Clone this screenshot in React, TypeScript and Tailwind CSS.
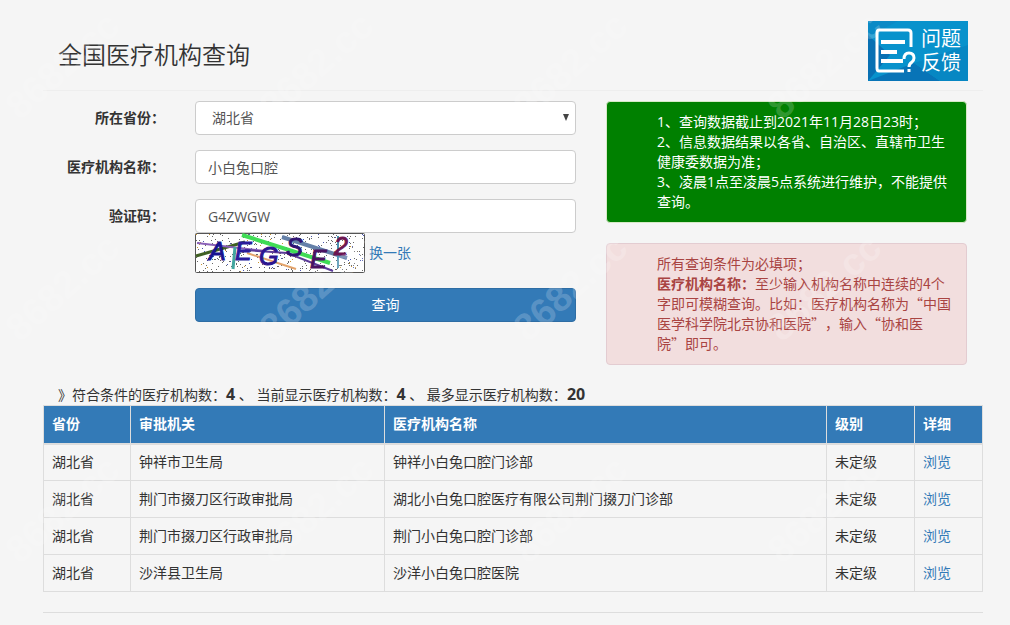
import { useId } from 'react';

type Clinic = {
  province: string;
  authority: string;
  name: string;
  level: string;
};

const CLINICS: Clinic[] = [
  { province: '湖北省', authority: '钟祥市卫生局', name: '钟祥小白兔口腔门诊部', level: '未定级' },
  { province: '湖北省', authority: '荆门市掇刀区行政审批局', name: '湖北小白兔口腔医疗有限公司荆门掇刀门诊部', level: '未定级' },
  { province: '湖北省', authority: '荆门市掇刀区行政审批局', name: '荆门小白兔口腔门诊部', level: '未定级' },
  { province: '湖北省', authority: '沙洋县卫生局', name: '沙洋小白兔口腔医院', level: '未定级' },
];

const COLUMNS = [
  { label: '省份', width: 'w-[87px]' },
  { label: '审批机关', width: 'w-[254px]' },
  { label: '医疗机构名称', width: '' },
  { label: '级别', width: 'w-[88px]' },
  { label: '详细', width: 'w-[68px]' },
];

const MARKS = [121, 343, 565].flatMap((y) => [20, 274, 528, 782].map((x) => ({ x, y })));

const CONTROL =
  'block h-[34px] w-full rounded-sm border border-[#ccc] bg-white px-3 text-sm text-[#555] outline-none focus:border-[#66afe9]';
const LABEL = 'w-[122px] shrink-0 pt-[7px] text-right text-sm leading-5 font-bold';

// Background specks of the captcha, spread by a small fixed generator
const SPECKS = Array.from({ length: 420 }, (_, i) => ({
  x: (i * 73 + ((i * i) % 41) * 5) % 168,
  y: (i * 31 + ((i * i) % 23) * 3) % 38,
  color: i % 9 === 0 ? '#c8952f' : i % 7 === 0 ? '#4a56b0' : '#666',
}));

const CAPTCHA_LETTERS = [
  { char: 'A', x: 14, y: 27, color: '#17138f' },
  { char: 'E', x: 40, y: 27, color: '#2a1a9c' },
  { char: 'G', x: 64, y: 32, color: '#2c1590' },
  { char: 'S', x: 91, y: 23, color: '#2f1272' },
  { char: 'E', x: 115, y: 35, color: '#4a1262' },
  { char: '2', x: 139, y: 22, color: '#6c1450' },
];

const Captcha = () => (
  <svg viewBox="0 0 170 40" className="block h-10 w-[170px] shrink-0" role="img" aria-label="验证码">
    <rect x="0.5" y="0.5" width="169" height="39" rx="1" fill="#fff" stroke="#555" />
    {SPECKS.map((s, i) => (
      <rect key={i} x={s.x + 1} y={s.y + 1} width="1" height="1" fill={s.color} />
    ))}
    <g fill="none">
      <path d="M1 23 L50 9" stroke="#3f5f22" strokeWidth="3" />
      <path d="M2 10 L70 18" stroke="#8a60b8" strokeWidth="2" />
      <path d="M47 2 L135 30" stroke="#3fdc55" strokeWidth="4" />
      <path d="M87 4 L152 25" stroke="#6480a8" strokeWidth="4" />
      <path d="M50 17 L92 20 L138 38" stroke="#5b3b98" strokeWidth="2" />
      <path d="M52 20 L101 36" stroke="#e3a36b" strokeWidth="2" />
      <path d="M40 14 L38 36" stroke="#43a6a0" strokeWidth="3" />
      <path d="M143 3 V35" stroke="#4c92b2" strokeWidth="2" />
    </g>
    <g fontFamily="Liberation Sans, sans-serif" fontSize="25" fontStyle="italic" strokeWidth="1">
      {CAPTCHA_LETTERS.map((l) => (
        <text key={l.x} x={l.x} y={l.y} fill={l.color} stroke={l.color}>
          {l.char}
        </text>
      ))}
    </g>
  </svg>
);

const FeedbackLink = () => (
  <a href="#feedback" className="relative flex h-[60px] w-[100px] items-center overflow-hidden bg-[#0892cc] pl-[7px] text-white">
    <svg viewBox="0 0 100 60" className="absolute inset-0 h-full w-full" aria-hidden="true">
      <path d="M0 16 L30 0 H0Z" fill="#0b8ac6" />
      <path d="M0 14 L22 34 L0 60Z" fill="#0870b3" />
      <path d="M0 60 L46 42 L72 60Z" fill="#0874b7" />
      <path d="M46 42 L100 24 V60 H72Z" fill="#0787c3" />
    </svg>
    <svg viewBox="0 0 42 46" className="relative h-[46px] w-[42px] shrink-0" fill="none" stroke="#fff" aria-hidden="true">
      <path d="M36 19 V5 Q36 2 33 2 H4 Q2 2 2 5 V40 Q2 43 4 43 H29" strokeWidth="3" />
      <path d="M6 14 H30 M6 24 H22 M6 33 H28" strokeWidth="4" />
      <path d="M29 31 Q29 25 34 25 Q39 25 39 30 Q39 32 37 34 Q34 36 34 39" strokeWidth="3" />
      <path d="M34 41 V44" strokeWidth="3" />
    </svg>
    <span className="relative ml-1 text-xl leading-6">
      问题
      <br />
      反馈
    </span>
  </a>
);

const Watermark = () => (
  <div className="pointer-events-none absolute inset-0 overflow-hidden" aria-hidden="true">
    <svg className="h-full w-full">
      {MARKS.map((m) => (
        <text
          key={`${m.x}-${m.y}`}
          x={m.x}
          y={m.y}
          transform={`rotate(-42 ${m.x} ${m.y})`}
          className="fill-white/20 font-bold"
          fontFamily="Liberation Sans, sans-serif"
          fontSize="38"
        >
          8682.cc
        </text>
      ))}
    </svg>
  </div>
);

export default function App() {
  const id = useId();

  return (
    <div className="relative min-h-screen bg-[#f5f5f5] px-7 font-['Open_Sans','Noto_Sans_CJK_SC',sans-serif] text-sm leading-5 text-[#333] sm:pr-[27px] sm:pl-[43px]">
      <header className="flex h-[91px] items-end justify-between border-b border-[#eee] px-[15px] pb-[9px]">
        <h1 className="pb-[13px] text-2xl leading-[26px] font-[350]">全国医疗机构查询</h1>
        <FeedbackLink />
      </header>

      <main>
        <div className="flex items-start gap-[30px] pt-[10px] pr-4">
          <form className="flex flex-1 flex-col gap-[15px]" onSubmit={(e) => e.preventDefault()}>
            <div className="flex gap-[30px]">
              <label htmlFor={`${id}-province`} className={LABEL}>所在省份：</label>
              <div className="relative flex-1">
                <select id={`${id}-province`} defaultValue="湖北省" className={`${CONTROL} appearance-none pl-4`}>
                  <option>湖北省</option>
                </select>
                <svg viewBox="0 0 6 7" className="pointer-events-none absolute top-[13px] right-[7px] h-[7px] w-[6px]" aria-hidden="true">
                  <path d="M0 0 H6 L3 7Z" fill="#444" />
                </svg>
              </div>
            </div>
            <div className="flex gap-[30px]">
              <label htmlFor={`${id}-name`} className={LABEL}>医疗机构名称：</label>
              <div className="flex-1">
                <input id={`${id}-name`} type="text" defaultValue="小白兔口腔" className={CONTROL} />
              </div>
            </div>
            <div className="flex gap-[30px]">
              <label htmlFor={`${id}-code`} className={LABEL}>验证码：</label>
              <div className="flex-1">
                <input id={`${id}-code`} type="text" defaultValue="G4ZWGW" className={CONTROL} />
                <div className="flex items-center gap-1">
                  <Captcha />
                  <a href="#refresh" className="text-[#337ab7]">换一张</a>
                </div>
              </div>
            </div>
            <button type="submit" className="ml-[152px] h-[34px] rounded-sm border border-[#2e6da4] bg-[#337ab7] text-sm text-white">
              查询
            </button>
          </form>

          <aside className="flex w-[361px] shrink-0 flex-col gap-5">
            <div className="rounded-sm border border-[#d6e9c6] bg-[green] py-[10px] pr-[14px] pl-[50px] text-white">
              <p>1、查询数据截止到2021年11月28日23时；</p>
              <p>2、信息数据结果以各省、自治区、直辖市卫生健康委数据为准；</p>
              <p>3、凌晨1点至凌晨5点系统进行维护，不能提供查询。</p>
            </div>
            {/* CJK font first, so that the curly quotes take a full square */}
            <div className="rounded-sm border border-[#e3ccd1] bg-[#f2dede] pt-[9px] pr-[14px] pb-[11px] pl-[50px] font-['Noto_Sans_CJK_SC',sans-serif] text-[#a94442] [text-spacing-trim:space-all]">
              <p>所有查询条件为必填项；</p>
              <p>
                <strong>医疗机构名称：</strong>至少输入机构名称中连续的4个字即可模糊查询。比如：医疗机构名称为“中国医学科学院北京协和医院”，输入“协和医院”即可。
              </p>
            </div>
          </aside>
        </div>

        <p className="pt-5 pl-[15px]">
          》符合条件的医疗机构数：<strong className="text-base leading-4">4</strong> 、 当前显示医疗机构数：
          <strong className="text-base leading-4">4</strong> 、 最多显示医疗机构数：
          <strong className="text-base leading-4">20</strong>
        </p>

        <table className="w-full table-fixed border-collapse border border-[#ddd]">
          <thead>
            <tr className="h-[38px] bg-[#337ab7] text-left text-white">
              {COLUMNS.map((c) => (
                <th key={c.label} className={`border border-b-2 border-[#ddd] px-2 font-bold ${c.width}`}>
                  {c.label}
                </th>
              ))}
            </tr>
          </thead>
          <tbody>
            {CLINICS.map((c) => (
              <tr key={c.name} className="h-[37px]">
                <td className="border border-[#ddd] px-2">{c.province}</td>
                <td className="border border-[#ddd] px-2">{c.authority}</td>
                <td className="border border-[#ddd] px-2">{c.name}</td>
                <td className="border border-[#ddd] px-2">{c.level}</td>
                <td className="border border-[#ddd] px-2">
                  <a href="#detail" className="text-[#337ab7]">浏览</a>
                </td>
              </tr>
            ))}
          </tbody>
        </table>

        <hr className="mt-5 border-[#ddd]" />
      </main>

      <Watermark />
    </div>
  );
}
